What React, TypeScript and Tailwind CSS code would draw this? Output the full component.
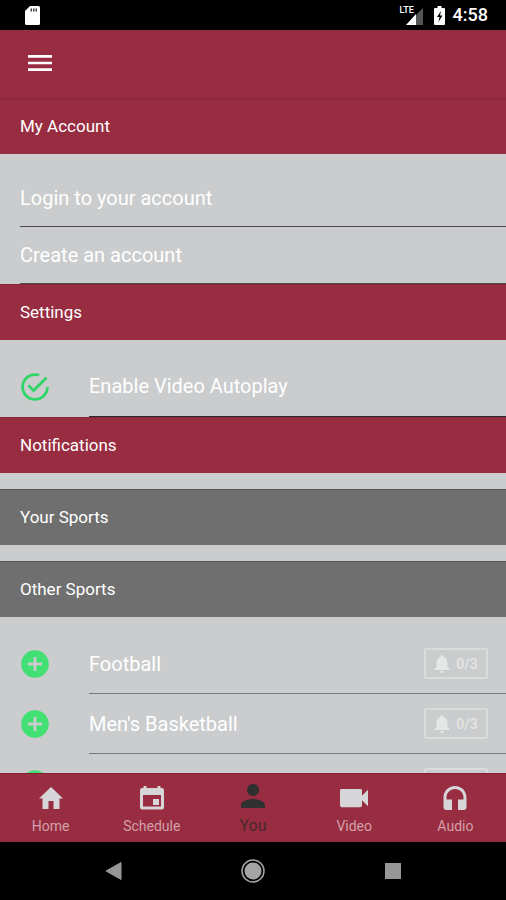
import React, { useState } from 'react';
import { IoMdAddCircle, IoMdCheckmarkCircleOutline, IoMdPerson, IoMdVideocam } from 'react-icons/io';
import { MdMenu } from 'react-icons/md';

interface IconProps {
  className?: string;
}

const HomeIcon: React.FC<IconProps> = ({ className }) => (
  <svg viewBox="0 0 32 32" fill="currentColor" className={className} aria-hidden="true">
    <path d="M16 5 4 16.500h3.500V27h6v-8h5v8h6V16.500H28z" />
  </svg>
);

const CalendarIcon: React.FC<IconProps> = ({ className }) => (
  <svg viewBox="0 0 32 32" fill="currentColor" className={className} aria-hidden="true">
    <path
      fillRule="evenodd"
      d="M7.500 4h3v2h11V4h3v2H26a2 2 0 0 1 2 2v17.500a2 2 0 0 1-2 2H6a2 2 0 0 1-2-2V8a2 2 0 0 1 2-2h1.500zM7 13v11.500h18V13z"
    />
    <path d="M17 17h6v6h-6z" />
  </svg>
);

const HeadphonesIcon: React.FC<IconProps> = ({ className }) => (
  <svg viewBox="0 0 32 32" fill="currentColor" className={className} aria-hidden="true">
    <path d="M16 4C9.400 4 4.500 9 4.500 15.500V25a3 3 0 0 0 3 3H13V17.500H7.500v-2C7.500 10.700 11.200 7 16 7s8.500 3.700 8.500 8.500v2H19V28h5.500a3 3 0 0 0 3-3v-9.500C27.500 9 22.600 4 16 4z" />
  </svg>
);

const BellIcon: React.FC<IconProps> = ({ className }) => (
  <svg viewBox="0 0 16 18" fill="currentColor" className={className} aria-hidden="true">
    <path d="M8 18a2 2 0 0 0 2-2H6a2 2 0 0 0 2 2zM13.500 12V7.500c0-2.800-1.600-4.800-4-5.500V1.500a1.500 1.500 0 0 0-3 0V2c-2.400.7-4 2.700-4 5.500V12L.5 14v1h15v-1z" />
  </svg>
);

const SPORTS = ['Football', "Men's Basketball", "Women's Basketball"];

const TABS = [
  { label: 'Home', Icon: HomeIcon },
  { label: 'Schedule', Icon: CalendarIcon },
  { label: 'You', Icon: IoMdPerson },
  { label: 'Video', Icon: IoMdVideocam },
  { label: 'Audio', Icon: HeadphonesIcon },
];

const StatusBar: React.FC = () => (
  <div className="h-[30px] shrink-0 bg-black flex items-center pl-[25px] pr-[18px] text-white">
    <svg viewBox="0 0 15 19" className="w-[15px] h-[19px]" aria-hidden="true">
      <path d="M5 0h8.500a1.500 1.500 0 0 1 1.500 1.500v16a1.500 1.500 0 0 1-1.500 1.500h-12a1.500 1.500 0 0 1-1.500-1.500V5z" fill="#fff" />
      <path d="M5.500 2.500h1.500v3H5.500zM8 2.500h1.500v3H8zM10.500 2.500h1.500v3h-1.500z" fill="#444" />
    </svg>
    <div className="ml-auto flex items-center">
      <div className="relative w-[22px] h-[19px]">
        <svg viewBox="0 0 22 19" className="w-[22px] h-[19px]" aria-hidden="true">
          <path d="M22 2v17H5z" fill="#555" />
          <path d="M15 8v11H5z" fill="#fff" />
        </svg>
        <span className="absolute -left-px top-0 text-[9px] leading-[9px] font-medium">LTE</span>
      </div>
      <svg viewBox="0 0 11 19" className="w-[11px] h-[19px] ml-[11px]" aria-hidden="true">
        <path d="M3.500 0h4v2H10a1 1 0 0 1 1 1v15a1 1 0 0 1-1 1H1a1 1 0 0 1-1-1V3a1 1 0 0 1 1-1h2.500z" fill="#fff" />
        <path d="M7 5 3 11h2.500L4.500 16l4-6.500H6z" fill="#000" />
      </svg>
      <span className="ml-2 text-lg leading-5 font-medium">4:58</span>
    </div>
  </div>
);

const SectionHeader: React.FC<{ title: string; muted?: boolean }> = ({ title, muted }) => (
  <h2
    className={`h-14 px-5 flex items-center text-[17px] font-normal text-white border-t ${
      muted ? 'bg-[#6f6f6f] border-[#565656]' : 'bg-[#982c40] border-[#8a2438]'
    }`}
  >
    {title}
  </h2>
);

const SportRow: React.FC<{ name: string }> = ({ name }) => (
  <li className="flex items-center h-[60px] pl-5">
    <button type="button" aria-label={`Add ${name}`} className="w-[69px] shrink-0">
      <IoMdAddCircle className="w-[34px] h-[34px] -ml-[2px] text-[#42df73]" />
    </button>
    <div className="flex-1 h-full flex items-center justify-between pr-[18px] border-b border-[#77797b]">
      <span className="text-xl text-white">{name}</span>
      <button
        type="button"
        className="w-16 h-[31px] border-2 border-[#dadbdb] rounded-xs flex items-center justify-center gap-1.5 text-[#e5e6e6] text-sm font-medium"
      >
        <BellIcon className="w-4 h-[18px]" />
        0/3
      </button>
    </div>
  </li>
);

export default function App() {
  const [activeTab, setActiveTab] = useState('You');
  const [autoplay, setAutoplay] = useState(true);

  return (
    <div className="h-screen flex flex-col bg-[#cacccd] font-[Roboto,sans-serif]">
      <StatusBar />

      <header className="h-[70px] shrink-0 bg-[#982c40] border-b-2 border-[#8a2a3b] px-6 pb-0.5 flex items-center">
        <button type="button" aria-label="Menu">
          <MdMenu className="w-8 h-8 text-white" />
        </button>
      </header>

      <main className="flex-1 min-h-0 overflow-y-auto [scrollbar-width:none]">
        <h2 className="h-[54px] px-5 flex items-center text-[17px] font-normal text-white bg-[#982c40]">My Account</h2>
        <ul className="pt-4 pl-5 text-xl text-white">
          {['Login to your account', 'Create an account'].map((text) => (
            <li key={text} className="border-b border-[#4c4c4e]">
              <a href="#" className="h-14 flex items-center">{text}</a>
            </li>
          ))}
        </ul>

        <SectionHeader title="Settings" />
        <div className="pt-4">
          <label className="relative flex items-center h-[61px] pl-5 text-xl text-white">
            <input
              type="checkbox"
              checked={autoplay}
              onChange={(e) => setAutoplay(e.target.checked)}
              className="sr-only"
            />
            <span className="w-[69px] shrink-0">
              <IoMdCheckmarkCircleOutline
                className={`w-[34px] h-[34px] -ml-[2px] ${autoplay ? 'text-[#2fd566]' : 'text-[#8a8c8d]'}`}
              />
            </span>
            <span className="flex-1 h-full flex items-center border-b border-[#2c2c2e]">Enable Video Autoplay</span>
          </label>
        </div>

        <SectionHeader title="Notifications" />
        <div className="pt-4 flex flex-col gap-4">
          <SectionHeader title="Your Sports" muted />
          <SectionHeader title="Other Sports" muted />
        </div>
        <ul className="pt-[17px]">
          {SPORTS.map((name) => (
            <SportRow key={name} name={name} />
          ))}
        </ul>
      </main>

      <nav className="h-[69px] shrink-0 bg-[#982c40] border-t border-[#8a1c33] grid grid-cols-5">
        {TABS.map(({ label, Icon }) => {
          const active = label === activeTab;
          return (
            <button
              key={label}
              type="button"
              onClick={() => setActiveTab(label)}
              className={`flex flex-col items-center ${active ? 'pt-[6px] text-[#303030]' : 'pt-2 text-[#d6d6d8]'}`}
            >
              <Icon className="w-8 h-8" />
              <span className={active ? 'text-base leading-7 text-[#47292f]' : 'text-sm leading-6 text-[#d3a0aa]'}>
                {label}
              </span>
            </button>
          );
        })}
      </nav>

      <div className="h-[58px] shrink-0 bg-black flex items-center justify-center gap-[116px]">
        <button type="button" aria-label="Back">
          <svg viewBox="0 0 24 24" className="w-6 h-6">
            <path d="M5 12 20 3.500v17z" fill="#979797" stroke="#979797" strokeLinejoin="round" />
          </svg>
        </button>
        <button type="button" aria-label="Home screen">
          <svg viewBox="0 0 24 24" className="w-6 h-6">
            <circle cx="12" cy="12" r="11" fill="none" stroke="#a4a4a4" strokeWidth="1.500" />
            <circle cx="12" cy="12" r="8.500" fill="#a4a4a4" />
          </svg>
        </button>
        <button type="button" aria-label="Recent apps">
          <svg viewBox="0 0 24 24" className="w-6 h-6">
            <path d="M4 4h16v16H4z" fill="#979797" />
          </svg>
        </button>
      </div>
    </div>
  );
}
